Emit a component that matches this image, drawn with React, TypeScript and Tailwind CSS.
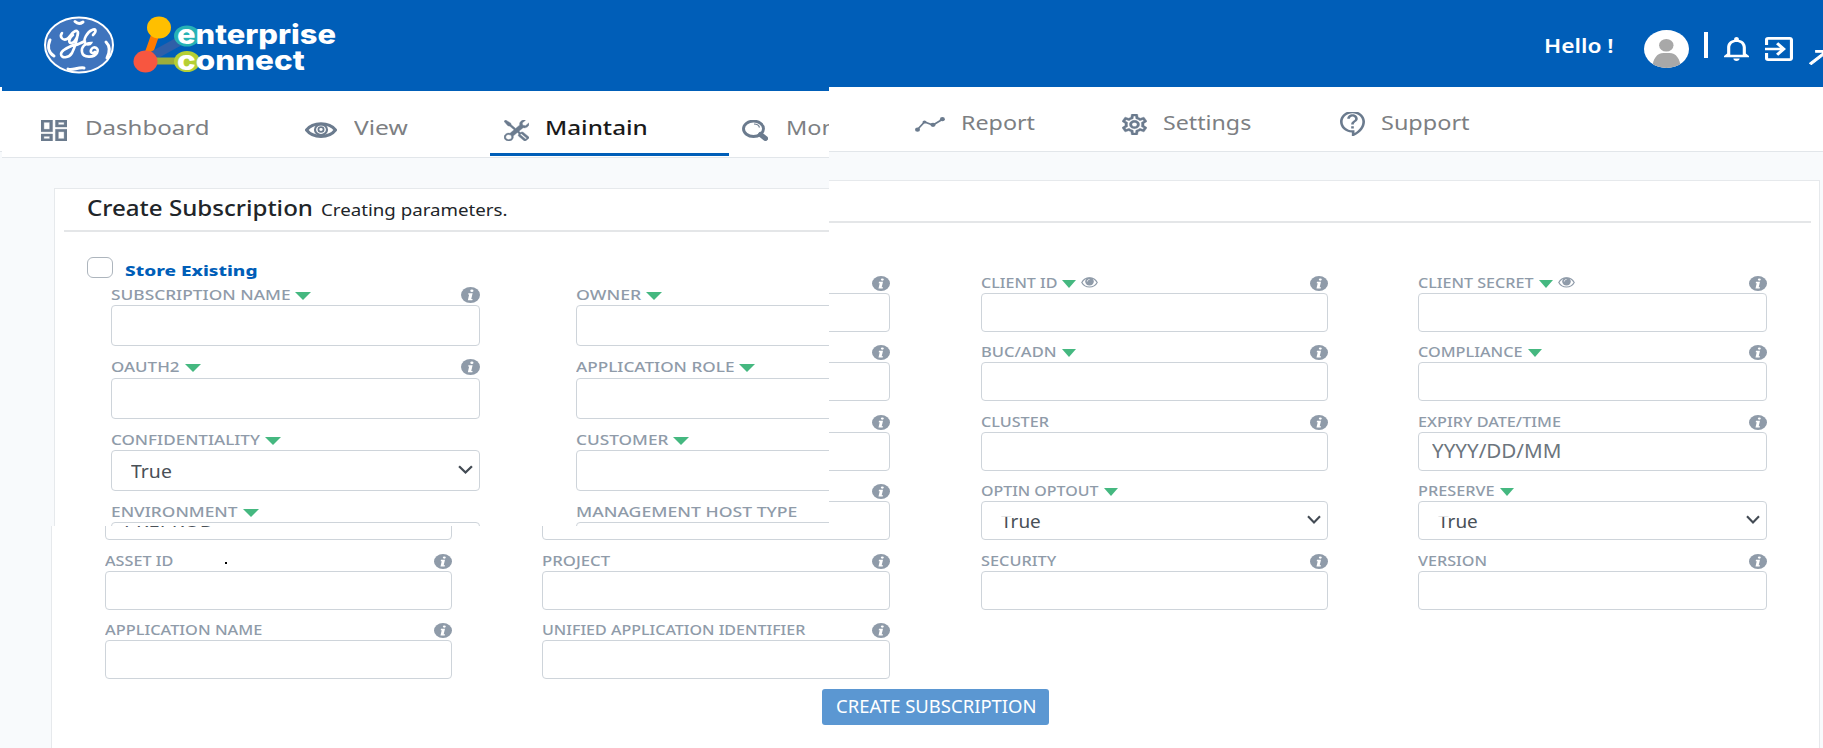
import { useLayoutEffect, useRef, useState, type ReactNode } from "react";
import {
  MdCallMade,
  MdExitToApp,
  MdNotificationsNone,
  MdOutlineContactSupport,
  MdOutlineDashboard,
  MdOutlineSettings,
} from "react-icons/md";
import { BsTools } from "react-icons/bs";

/** A single line of text stretched horizontally to a given width. */
function Fit({ w, className = "", children }: { w: number; className?: string; children: ReactNode }) {
  const ref = useRef<HTMLSpanElement>(null);
  const [scale, setScale] = useState(1);
  useLayoutEffect(() => {
    const natural = ref.current?.offsetWidth;
    if (natural) setScale(w / natural);
  }, [w]);
  return (
    <span className={"block shrink-0 " + className} style={{ width: w }}>
      <span ref={ref} className="inline-block origin-left whitespace-nowrap align-top" style={{ transform: `scaleX(${scale})` }}>
        {children}
      </span>
    </span>
  );
}

function InfoIcon({ className }: { className: string }) {
  return (
    <svg viewBox="0 0 18 16" preserveAspectRatio="none" className={"shrink-0 " + className}>
      <ellipse cx="9" cy="8" rx="9" ry="8" fill="#8f9ba9" />
      <ellipse cx="10.3" cy="3.8" rx="1.5" ry="1.2" fill="#fff" />
      <path d="M7 6.2h4L9.700 12h1.300l-.3 1.300H6.500L7.700 7.600H6.700z" fill="#fff" />
    </svg>
  );
}

function Triangle({ w = 14 }: { w?: number }) {
  return (
    <svg viewBox="0 0 14 7" preserveAspectRatio="none" className="ml-[5px] mt-[5px] h-[8px] shrink-0" style={{ width: w }}>
      <path d="M0 0h14L7 7z" fill="#45b880" />
    </svg>
  );
}

function FieldEye() {
  return (
    <svg viewBox="0 0 17 11" fill="none" className="ml-[5px] mt-[2px] h-[11px] w-[17px] shrink-0">
      <path d="M.8 5.500C4-.8 13-.8 16.200 5.500 13 11.500 4 11.500.8 5.500z" stroke="#8f9ba9" strokeWidth="1.200" />
      <ellipse cx="8.500" cy="4.500" rx="4.300" ry="4" fill="#8f9ba9" />
      <path d="M6.300 4.500c0-1.300.9-2 2.200-2" stroke="#fff" strokeWidth=".8" />
    </svg>
  );
}

function Chevron({ className }: { className: string }) {
  return (
    <svg viewBox="0 0 14 9" fill="none" preserveAspectRatio="none" className={className}>
      <path d="M1 1.2 7 7.4l6-6.2" stroke="#434b54" strokeWidth="2.1" />
    </svg>
  );
}

type FieldProps = {
  label?: string;
  w?: number;
  required?: boolean;
  eye?: boolean;
  info?: boolean;
  large?: boolean;
  children?: ReactNode;
};

function Field({ label, w = 0, required, eye, info = true, large, children }: FieldProps) {
  return (
    <div className="flex flex-col">
      <div className={"flex items-start text-[15px] leading-[14px] text-[#8f9ba9] " + (large ? "h-[18.3px]" : "h-[18px]")}>
        {label && <Fit w={w} className="font-medium">{label}</Fit>}
        {required && <Triangle w={large ? 16 : 14} />}
        {eye && <FieldEye />}
        {info && <InfoIcon className={large ? "ml-auto h-[16px] w-[19px]" : "ml-auto mt-px h-[15px] w-[18px]"} />}
      </div>
      <div className={"flex items-center rounded-[4px] border border-[#ced4da] bg-white " + (large ? "h-[41px]" : "h-[39px]")}>
        {children}
      </div>
    </div>
  );
}

function SelectedTrue() {
  return (
    <>
      <Fit w={40} className="ml-[19px] text-[18px] leading-[28px] text-[#495057] [clip-path:inset(10px_0_0_0)]">True</Fit>
      <Chevron className="mb-[3px] ml-auto mr-[6px] h-[9px] w-[14px]" />
    </>
  );
}

function HeaderRight() {
  return (
    <div className="flex h-full items-start justify-end text-white">
      <Fit w={70} className="mr-[30px] mt-[32px] text-[19.5px] font-semibold leading-[27px]">Hello !</Fit>
      <svg viewBox="0 0 45 38" className="mt-[30px] h-[38px] w-[45px] shrink-0">
        <clipPath id="avatar"><ellipse cx="22.5" cy="19" rx="22.5" ry="19" /></clipPath>
        <g clipPath="url(#avatar)">
          <rect width="45" height="38" fill="#fff" />
          <ellipse cx="22.3" cy="15.3" rx="7.2" ry="6.3" fill="#a8a8a8" />
          <path d="M8.5 38c0-9 4.500-15 11-15h6c6.500 0 11 6 11 15z" fill="#a8a8a8" />
        </g>
      </svg>
      <div className="ml-[15px] mt-[32px] h-[26px] w-[4px] shrink-0 bg-white" />
      <MdNotificationsNone preserveAspectRatio="none" viewBox="4 2.500 16 19.500" className="ml-[16px] mt-[37px] h-[24px] w-[25px] shrink-0" />
      <MdExitToApp preserveAspectRatio="none" viewBox="3 3 18 18" className="ml-[16px] mt-[37px] h-[24px] w-[28px] shrink-0" />
      <div className="ml-[16px] mt-[50px] h-[15px] w-[14px] shrink-0 overflow-hidden">
        <MdCallMade preserveAspectRatio="none" viewBox="3.500 4.500 15.500 16" className="h-[15px] w-[19px] stroke-white stroke-1" />
      </div>
    </div>
  );
}

function GeLogo() {
  return (
    <svg viewBox="0 0 72 60" fill="none" stroke="#fff" className="h-[60px] w-[72px]">
      <ellipse cx="36" cy="30" rx="34" ry="27.500" fill="#3f74bd" strokeWidth="2" />
      <path d="M32 6.500c3 3 6 2 8 .5M7 25c-3 7-1 13 4 16" strokeWidth="3" strokeLinecap="round" />
      <path d="M41 53c-6-1-12 3-16 1M63 27c4 4 4 10 1 16" strokeWidth="3" strokeLinecap="round" />
      <g strokeWidth="2.600" strokeLinecap="round">
        <path d="M19 18c-3 4 1 8 5 6 4-3 6-9 10-8 3 2-2 12-6 12-3 0-2-5 2-8M35 17c-1 8-3 15-6 21-3 5-11 6-11 1 0-4 8-7 15-10" />
        <path d="M50 20c4-4 3-7-1-5-5 2-9 10-7 13 1 2 5 2 6 0-6 0-10 4-9 9 1 6 12 6 15 1 3-5-4-8-6-3-1 3 2 4 4 2M42 26c-4 2-6 3-9 4" />
      </g>
    </svg>
  );
}

function EnterpriseConnectLogo() {
  return (
    <div className="relative h-[60px] w-[204px]">
      <svg viewBox="0 0 204 60" className="block h-[60px] w-[204px]">
        <path d="M13 46 25 12" stroke="#ff7a00" strokeWidth="8" />
        <path d="M16 43 54 22" stroke="#2f5fa8" strokeWidth="9" />
        <path d="M14 46H55" stroke="#9bae3c" strokeWidth="7" />
        <ellipse cx="26" cy="12.500" rx="12" ry="11" fill="#ffbf00" />
        <ellipse cx="12.500" cy="46.500" rx="12" ry="11" fill="#f75640" />
        <ellipse cx="54" cy="21" rx="13" ry="10.500" fill="#27b2b5" />
        <ellipse cx="54" cy="46.500" rx="13" ry="10.500" fill="#b5cf35" />
      </svg>
      <div className="absolute left-[44px] top-[7px] flex flex-col font-['Inter',sans-serif] text-[27px] font-extrabold leading-[25.500px] text-white">
        <Fit w={159}>enterprise</Fit>
        <Fit w={128}>connect</Fit>
      </div>
    </div>
  );
}

function EyeIcon() {
  return (
    <svg viewBox="0 0 32 16" fill="none" stroke="#6b7b8e" className="h-[16px] w-[32px]">
      <path d="M1.500 8C8-.2 24-.2 30.500 8 24 16.500 8 16.500 1.500 8z" strokeWidth="3" />
      <ellipse cx="16" cy="7.700" rx="6" ry="5.300" strokeWidth="2.200" />
      <ellipse cx="16" cy="7.500" rx="2.600" ry="2.300" strokeWidth="1.800" />
    </svg>
  );
}

function SearchIcon() {
  return (
    <svg viewBox="0 0 26 21" fill="none" stroke="#6b7b8e" className="h-[21px] w-[26px]">
      <ellipse cx="11.500" cy="8.800" rx="10" ry="7.700" strokeWidth="2.900" />
      <path d="M12 4c3 0 5 1.500 5.500 3.500" strokeWidth="1.200" />
      <path d="m18.500 14.500 5 4" strokeWidth="5" strokeLinecap="round" />
    </svg>
  );
}

function ReportIcon() {
  return (
    <svg viewBox="0 0 30 15" fill="none" stroke="#6b7b8e" className="h-[15px] w-[30px]">
      <path d="M2 13 9.500 5l8.500 3 10-6" strokeWidth="1.800" />
      <g fill="#6b7b8e" stroke="none">
        <ellipse cx="2.500" cy="12.700" rx="2.500" ry="2.100" />
        <ellipse cx="9.500" cy="5" rx="2" ry="1.500" />
        <ellipse cx="18" cy="7.800" rx="2.600" ry="2.100" />
        <ellipse cx="27.400" cy="2.200" rx="2.500" ry="2.100" />
      </g>
    </svg>
  );
}

function EnlargedSection() {
  return (
    <section className="absolute left-[2px] top-0 h-[526px] w-[827px] overflow-hidden bg-[#f8fafc]">
      <header className="flex h-[91px] items-start bg-[#005eb8]">
        <div className="ml-[41px] mt-[15px]"><GeLogo /></div>
        <div className="ml-[18px] mt-[15px]"><EnterpriseConnectLogo /></div>
      </header>
      <nav className="flex h-[67px] w-[1000px] items-start border-b border-[#e2e6ea] bg-white text-[20px] leading-[28px] text-[#7d7f83]">
        <MdOutlineDashboard preserveAspectRatio="none" viewBox="3 3 18 18" className="ml-[39px] mt-[29px] h-[21px] w-[26px] stroke-[#6b7b8e] stroke-[0.3px] text-[#6b7b8e]" />
        <Fit w={125} className="ml-[18px] mt-[23px]">Dashboard</Fit>
        <div className="ml-[95px] mt-[31px]"><EyeIcon /></div>
        <Fit w={54} className="ml-[17px] mt-[23px]">View</Fit>
        <div className="ml-[82px] flex h-[65px] w-[239px] items-start border-b-[3px] border-[#005eb8] text-[#1a1a1a]">
          <BsTools preserveAspectRatio="none" className="ml-[14px] mt-[29px] h-[21px] w-[25px] stroke-[#6b7b8e] stroke-[0.3px] text-[#6b7b8e]" />
          <Fit w={103} className="ml-[16px] mt-[23px] font-medium">Maintain</Fit>
        </div>
        <div className="ml-[13px] mt-[29px]"><SearchIcon /></div>
        <Fit w={88} className="ml-[18px] mt-[23px]">Monitor</Fit>
      </nav>
      <div className="ml-[52px] mt-[30px] h-[400px] w-[900px] border-l border-t border-[#e6e9ec] bg-white">
        <div className="ml-[9px] flex h-[43px] items-start border-b-2 border-[#e4e6e8] text-[#212529]">
          <Fit w={226} className="ml-[23px] mt-[5px] text-[21px] font-medium leading-[28px]">Create Subscription</Fit>
          <Fit w={187} className="ml-[8px] mt-[8px] text-[17px] leading-[26px]">Creating parameters.</Fit>
        </div>
        <div className="ml-[32px] flex h-[55px] items-start">
          <div className="mt-[25px] h-[21px] w-[26px] rounded-[6px] border border-[#adb5bd] bg-white" />
          <Fit w={133} className="ml-[12px] mt-[29px] text-[14px] font-extrabold leading-[20px] text-[#005eb8]">Store Existing</Fit>
        </div>
        <div className="ml-[56px] grid auto-rows-[72.3px] grid-cols-[369px_369px] gap-x-[96px]">
          <Field large label="SUBSCRIPTION NAME" w={179} required />
          <Field large label="OWNER" w={65} required info={false} />
          <Field large label="OAUTH2" w={69} required />
          <Field large label="APPLICATION ROLE" w={158} required info={false} />
          <Field large label="CONFIDENTIALITY" w={149} required info={false}>
            <Fit w={41} className="ml-[19px] text-[18.500px] text-[#495057]">True</Fit>
            <Chevron className="mb-[2px] ml-auto mr-[6px] h-[9px] w-[15px]" />
          </Field>
          <Field large label="CUSTOMER" w={92} required info={false} />
          <Field large label="ENVIRONMENT" w={127} required info={false} />
          <Field large label="MANAGEMENT HOST TYPE" w={221} info={false} />
        </div>
      </div>
    </section>
  );
}

export default function App() {
  return (
    <div className="relative h-[748px] w-[1823px] overflow-hidden bg-[#f8fafc] font-['Noto_Sans',sans-serif]">
      <header className="h-[87px] bg-[#005eb8]"><HeaderRight /></header>
      <nav className="flex h-[65px] items-start border-b border-[#e2e6ea] bg-white pl-[915px] text-[19.500px] leading-[28px] text-[#7d7f83]">
        <div className="mt-[30px]"><ReportIcon /></div>
        <Fit w={74} className="ml-[16px] mt-[22px]">Report</Fit>
        <MdOutlineSettings preserveAspectRatio="none" viewBox="2.200 2 19.600 20" className="ml-[87px] mt-[27px] h-[21px] w-[25px] stroke-[#6b7b8e] stroke-[0.3px] text-[#6b7b8e]" />
        <Fit w={88} className="ml-[16px] mt-[22px]">Settings</Fit>
        <MdOutlineContactSupport preserveAspectRatio="none" viewBox="2 2 19 21" className="ml-[89px] mt-[25px] h-[24px] w-[25px] text-[#6b7b8e]" />
        <Fit w={89} className="ml-[16px] mt-[22px]">Support</Fit>
      </nav>
      <main className="ml-[51px] mt-[28px] h-[600px] w-[1769px] border border-[#e6e9ec] bg-white">
        <div className="mx-[8px] h-[42px] border-b-2 border-[#e4e6e8]" />
        <div className="ml-[53px] mt-[52px] grid auto-rows-[69.4px] grid-cols-[347px_348px_347px_349px] gap-x-[90.4px]">
          <Field />
          <Field />
          <Field label="CLIENT ID" w={76} required eye />
          <Field label="CLIENT SECRET" w={116} required eye />
          <Field />
          <Field />
          <Field label="BUC/ADN" w={76} required />
          <Field label="COMPLIANCE" w={105} required />
          <Field />
          <Field />
          <Field label="CLUSTER" w={68} />
          <Field label="EXPIRY DATE/TIME" w={143}>
            <Fit w={129} className="ml-[13px] text-[19px] text-[#6c757d]">YYYY/DD/MM</Fit>
          </Field>
          <Field>
            <Fit w={90} className="ml-[18px] text-[18px] text-[#495057]">PREPROD</Fit>
          </Field>
          <Field />
          <Field label="OPTIN OPTOUT" w={118} required info={false}><SelectedTrue /></Field>
          <Field label="PRESERVE" w={77} required info={false}><SelectedTrue /></Field>
          <div className="relative">
            <Field label="ASSET ID" w={68} />
            <span className="absolute left-[120px] top-[9px] h-[2px] w-[2px] bg-black" />
          </div>
          <Field label="PROJECT" w={68} />
          <Field label="SECURITY" w={75} />
          <Field label="VERSION" w={69} />
          <Field label="APPLICATION NAME" w={157} />
          <Field label="UNIFIED APPLICATION IDENTIFIER" w={263} />
        </div>
        <button className="ml-[770px] mt-[-2.400px] flex h-[36px] w-[227px] items-center rounded-[3px] bg-[#5b97d2] pl-[12px] text-[18px] text-white">
          <Fit w={201} className="-ml-px">CREATE SUBSCRIPTION</Fit>
        </button>
      </main>
      <EnlargedSection />
    </div>
  );
}
